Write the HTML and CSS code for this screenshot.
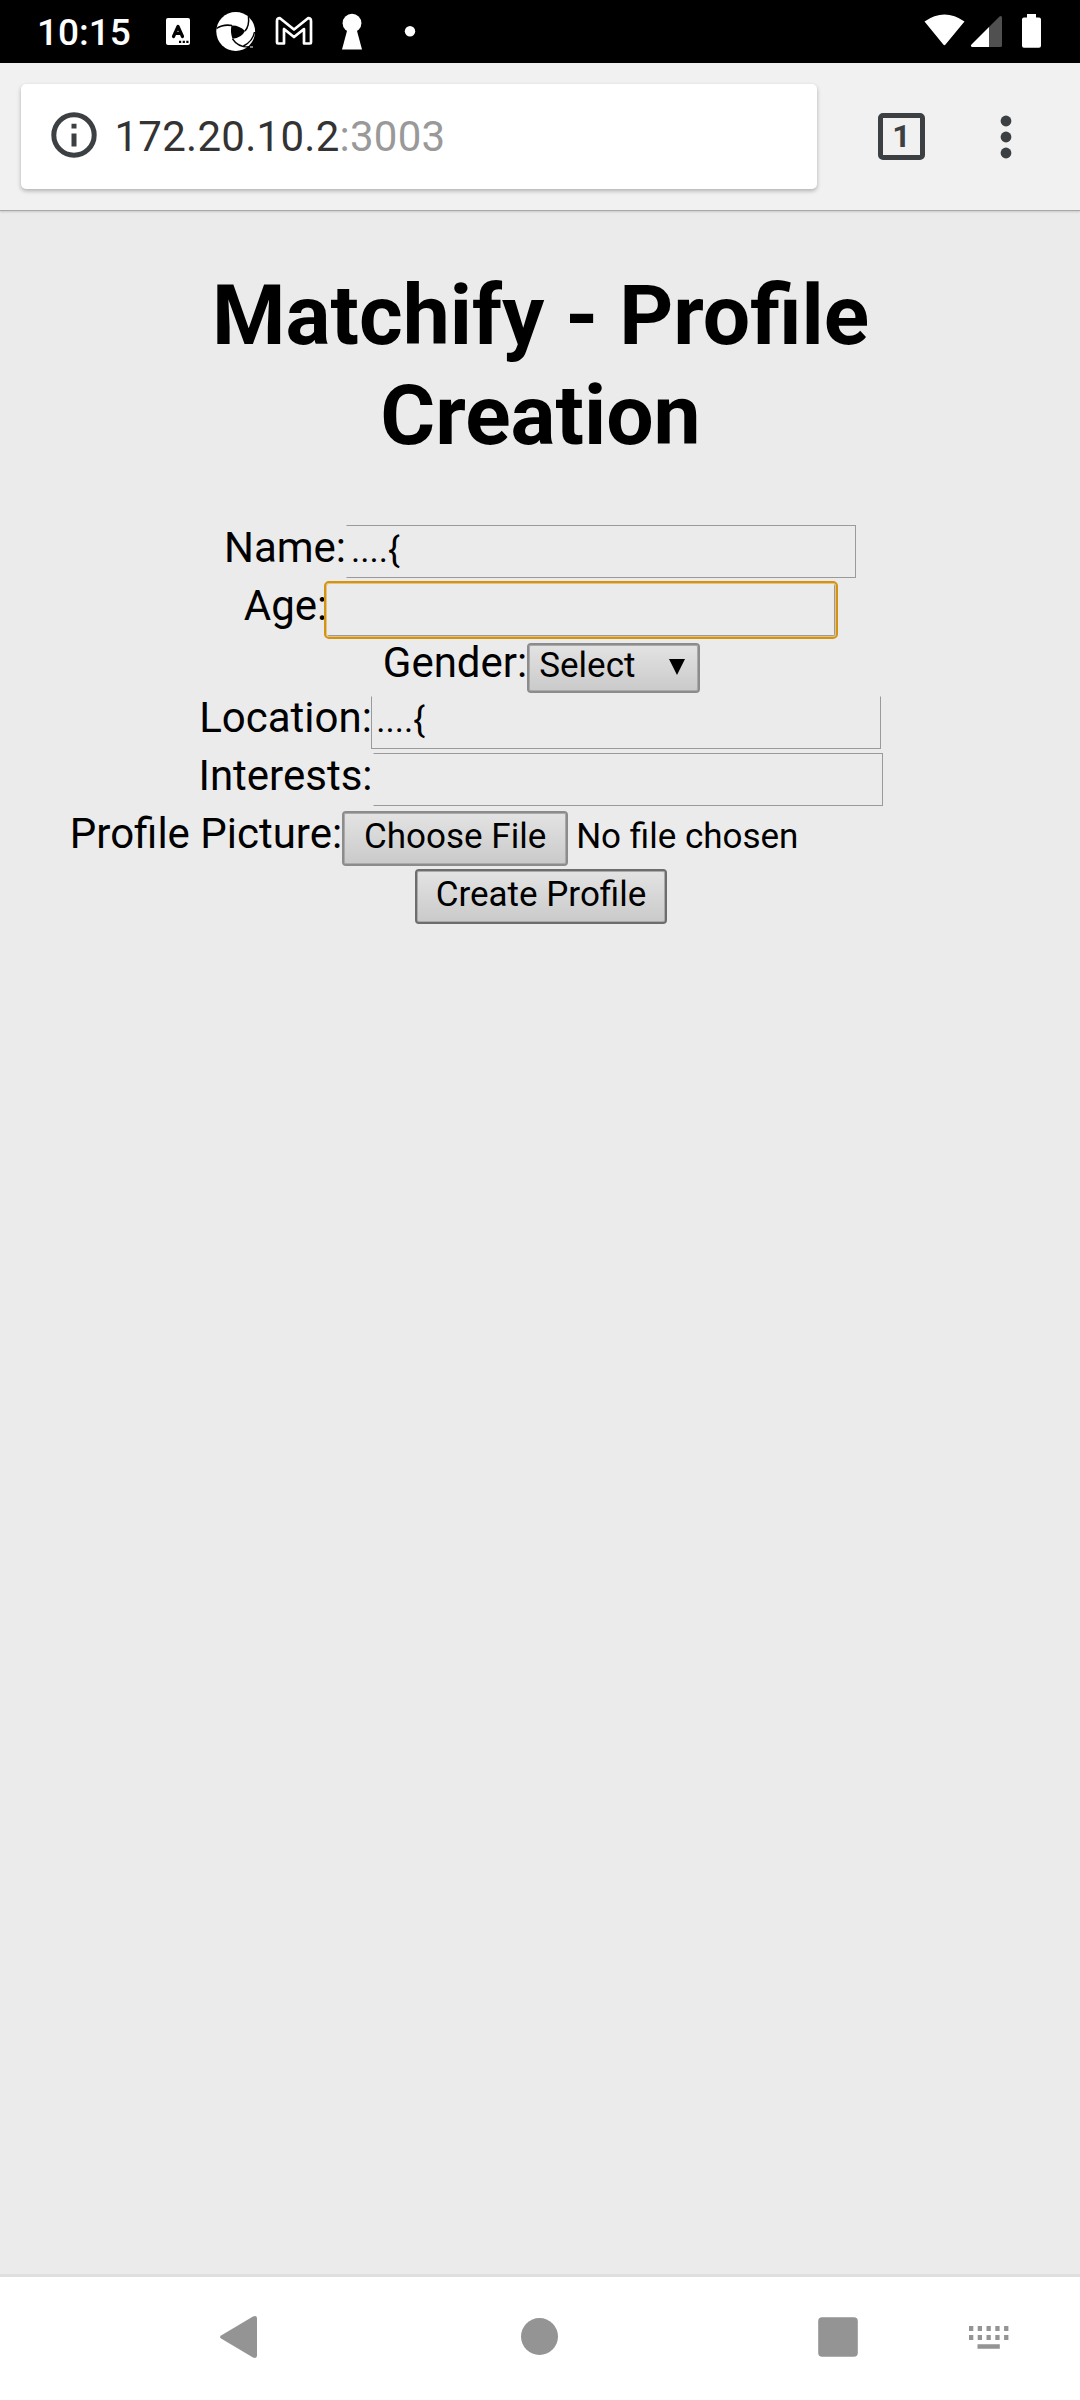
FILE: index.html
```html
<!DOCTYPE html>
<html lang="en">
<head>
<meta charset="utf-8">
<title>Matchify - Profile Creation</title>
<link rel="stylesheet" href="styles.css">
</head>
<body>
<div class="screen">
  <header class="status">
    <span class="clock">10:15</span>
    <svg class="notifications" width="252" height="63" viewBox="164 0 252 63" fill="#fff">
      <rect x="166" y="18" width="24" height="27" rx="2"/>
      <path d="M173.500 36.500L178 26.500L182.500 36.500M175 33.500H181" fill="none" stroke="#000" stroke-width="3.200" stroke-linecap="round" stroke-linejoin="round"/>
      <path d="M179 40.800h2.200v2.200H179zM182.700 40.800h2.200v2.200h-2.200zM186.300 40.800h2.200v2.200h-2.200z" fill="#000"/>
      <circle cx="235.700" cy="31.500" r="19.400"/>
      <path d="M231.500 25.500Q239 25 245 31Q241.500 38 232.500 38.800Q230 32 231.500 25.500Z" fill="#000"/>
      <path d="M216.500 28.500Q223 24 232 25.500M248.500 16.500Q249.500 26 245 31M254.500 32Q253 41 243.500 46M232.500 38.800Q238 47.500 250 47" fill="none" stroke="#000" stroke-width="1.500"/>
      <path d="M250 47h3" stroke="#fff"/>
      <path d="M277 42.500V21Q277 18 280 18.200L294 29.500L308 18.200Q311 18 311 21V42.500Q311 43.500 310 43.500H304V29L294 37L284 29V43.500H278Q277 43.500 277 42.500Z" fill="none" stroke="#fff" stroke-width="2.700" stroke-linejoin="round"/>
      <circle cx="352" cy="23.200" r="9.400"/>
      <path d="M347.500 29H356.500L362 49.500H342Z"/>
      <circle cx="410" cy="31.300" r="5.200"/>
    </svg>
    <svg class="signals" width="120" height="63" viewBox="922 0 120 63" fill="#fff">
      <path d="M924.500 21.500Q944.500 7.500 964.500 21.500L945.500 44.500Q944.400 46 943.300 44.500Z"/>
      <path d="M989 27V47H972Q970 46 971.500 44.500Z"/>
      <path d="M989 27L999.500 16.500Q1002 15 1002 18V45.500Q1002 47 1000.500 47H989Z" fill="#505050"/>
      <path d="M1027 14h9v3.600h3q2 0 2 2v26.200q0 2-2 2h-15q-2 0-2-2V19.600q0-2 2-2h3z"/>
    </svg>
  </header>

  <div class="toolbar">
    <div class="address">
      <svg width="46" height="46" viewBox="0 0 46 46">
        <circle cx="23" cy="23" r="20.200" fill="none" stroke="#3c4043" stroke-width="5"/>
        <path d="M20.500 11.800h5v4.700h-5zM20.500 21.500h5v13h-5z" fill="#3c4043"/>
      </svg>
      <span class="url">172.20.10.2<span class="port">:3003</span></span>
    </div>
    <div class="tabs">1</div>
    <svg width="12" height="44" viewBox="0 0 12 44" fill="#3c4043">
      <circle cx="6" cy="6" r="5.400"/><circle cx="6" cy="22" r="5.400"/><circle cx="6" cy="38" r="5.400"/>
    </svg>
  </div>

  <main class="page">
    <h1>Matchify - Profile<br>Creation</h1>
    <form class="profile">
      <div class="row"><label for="name">Name:</label><input class="field no-left" id="name" value="....{"></div>
      <div class="row row-age"><label for="age">Age:</label><input class="field no-left no-top focused" id="age"></div>
      <div class="row row-gender"><label>Gender:</label><div class="button select"><span>Select</span>
        <svg width="16" height="16" viewBox="0 0 16 16"><path d="M0 0H16L8 16Z"/></svg></div></div>
      <div class="row"><label for="location">Location:</label><input class="field no-top location" id="location" value="....{"></div>
      <div class="row row-interests"><label for="interests">Interests:</label><input class="field no-left" id="interests"></div>
      <div class="row row-file"><label>Profile Picture:</label><div class="file"><button type="button" class="button choose">Choose File</button><span>No file chosen</span></div></div>
      <div class="row row-create"><button type="button" class="button create">Create Profile</button></div>
    </form>
  </main>

  <nav class="navbar">
    <svg width="1080" height="123" viewBox="0 2277 1080 123" fill="#949494">
      <path d="M221.500 2335.200L253 2316.500Q257 2315 257 2318.500V2355.500Q257 2359 253 2357.500L221.500 2338.800Q218.500 2337 221.500 2335.200Z"/>
      <circle cx="539.500" cy="2336.500" r="18.500"/>
      <rect x="818.200" y="2317.200" width="39.600" height="39.600" rx="4"/>
      <path d="M969 2326h4.300v5H969zM977.700 2326h4.300v5h-4.300zM986.500 2326h4.300v5h-4.300zM995.300 2326h4.300v5h-4.300zM1004.100 2326h4.300v5h-4.300zM969 2335h4.300v5H969zM977.700 2335h4.300v5h-4.300zM986.500 2335h4.300v5h-4.300zM995.300 2335h4.300v5h-4.300zM1004.100 2335h4.300v5h-4.300zM977.500 2344.200h22.300v4.600h-22.300z"/>
    </svg>
  </nav>
</div>
</body>
</html>
```
FILE: styles.css
```css
* { box-sizing: border-box; }
body { margin: 0; font-family: Roboto, sans-serif; }
.screen {
  width: 1080px;
  height: 2400px;
  display: flex;
  flex-direction: column;
  background: #ebebeb;
}

.status {
  height: 63px;
  padding: 0 38px 0 37px;
  display: flex;
  align-items: center;
  background: #000;
  color: #fff;
}
.clock { width: 127px; font-size: 37px; font-weight: 500; line-height: 44px; padding-top: 3px; }
.signals { margin-left: auto; }

.toolbar {
  height: 148px;
  flex: none;
  padding: 21px 0 0 21px;
  display: flex;
  align-items: flex-start;
  background: #f1f1f1;
  border-bottom: 1px solid #a8a8a8;
  box-shadow: 0 1px 2px rgba(0, 0, 0, .15);
}
.address {
  width: 796px;
  height: 105px;
  padding-left: 29.5px;
  display: flex;
  align-items: center;
  background: #fff;
  border-radius: 5px;
  box-shadow: 0 2px 4px rgba(0, 0, 0, .27);
}
.address svg { flex: none; margin-top: -4px; }
.url { margin-left: 18px; font-size: 42px; letter-spacing: .27px; line-height: 50px; color: #333; }
.port { color: #999; }
.tabs {
  width: 47px;
  height: 47px;
  margin: 29px 75px 0 61px;
  border: 5px solid #3c4043;
  border-radius: 5px;
  color: #3c4043;
  font-size: 32px;
  font-weight: 700;
  line-height: 37px;
  text-align: center;
}
.toolbar > svg { margin-top: 31px; }

.page { flex: 1; }
h1 {
  margin: 55px 0 56px 1px;
  font-size: 84px;
  font-weight: 700;
  line-height: 100px;
  text-align: center;
}

.profile { font-size: 42px; }
.row {
  height: 58px;
  display: flex;
  justify-content: center;
  align-items: flex-start;
}
.row-age { height: 57px; }
.row-gender { height: 55px; padding-left: 3px; }
.row-interests { padding-left: 1px; }
.row-file, .row-create { padding-left: 2px; }
label { line-height: 52px; white-space: nowrap; }

.field {
  width: 510px;
  height: 53px;
  margin-top: 3px;
  padding: 0 5px 3px 4px;
  border: 1px solid #9a9a9a;
  border-radius: 0;
  background: transparent;
  font: 35px Roboto, sans-serif;
  color: #000;
  outline: none;
}
.no-left { border-left-color: transparent; }
.no-top { border-top-color: transparent; }
.location { width: 509.5px; margin: 4px 0 0 -.5px; padding-bottom: 5px; }
.focused {
  width: 508px;
  margin-top: 4px;
  margin-right: 1px;
  height: 52px;
  border-radius: 2px;
  box-shadow: 0 0 0 1px #e3c384;
  outline: 2px solid #d59410;
  outline-offset: 1px;
}

.button {
  height: 55px;
  margin: 3px 0 0;
  padding: 0;
  border: 2px solid #8c8c8c;
  border-radius: 4px;
  background: linear-gradient(#e3e3e3, #cacaca);
  box-shadow: inset 0 0 0 1px #aaa;
  font: 35px/41px Roboto, sans-serif;
  color: #000;
}
.select {
  width: 173px;
  height: 50px;
  margin-top: 6px;
  padding: 0 13px 6px 10px;
  display: flex;
  align-items: center;
  justify-content: space-between;
}
.select svg { margin-top: 3px; }
.file { width: 670px; display: flex; }
.choose { width: 226px; padding-bottom: 5px; }
.file span { margin-left: 8px; padding-top: 8px; font-size: 35px; line-height: 41px; }
.create { width: 252px; padding-bottom: 5px; border-color: #6d6d6d; }

.navbar { height: 126px; border-top: 3px solid #dfdfdf; background: #fff; }
.navbar svg { display: block; }
```
